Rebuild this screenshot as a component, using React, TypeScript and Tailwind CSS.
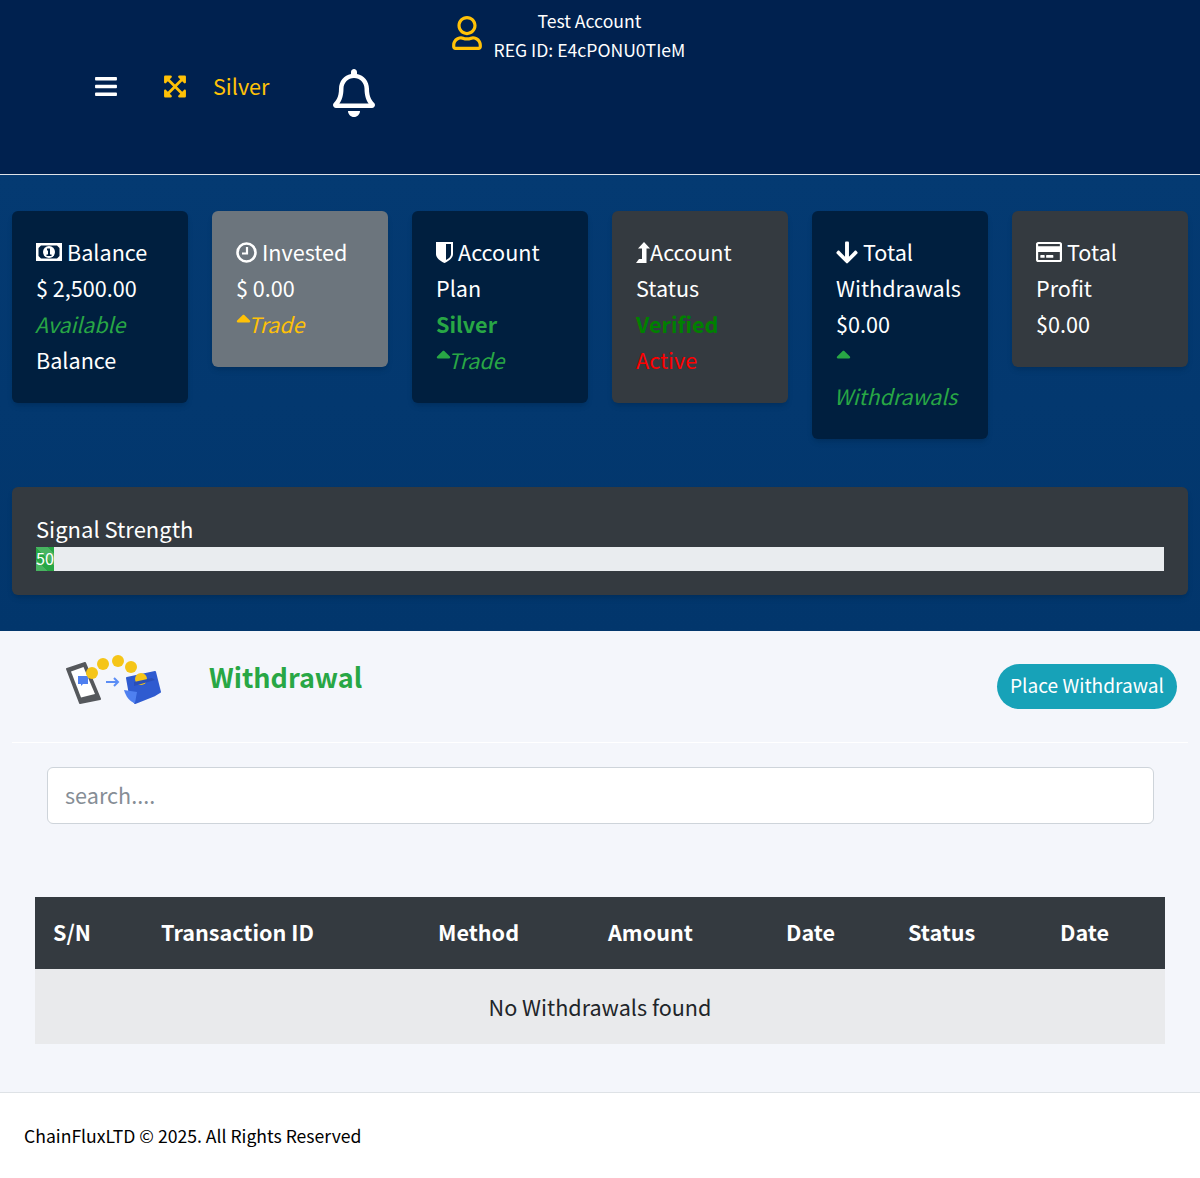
import type { ReactNode } from "react";
import { FaArrowDown, FaBars, FaExpandArrowsAlt, FaRegBell, FaRegCreditCard, FaRegUser, FaSortUp } from "react-icons/fa";

const font = { fontFamily: '"Noto Sans CJK SC", "Source Sans Pro", sans-serif' };

function Card({ tone, children }: { tone: string; children: ReactNode }) {
  return <div className={`w-[176px] rounded-md pb-[25px] pl-6 pr-6 pt-[23px] text-[21.6px]/[36px] text-white shadow-md ${tone}`}>{children}</div>;
}

function MoneyIcon() {
  return (
    <svg viewBox="0 0 26 18" className="h-[18px] w-[26px] shrink-0">
      <path fillRule="evenodd" fill="currentColor" d="M0 0h26v18H0zM5 2.500 2.500 5v8L5 15.500h16l2.500-2.500V5L21 2.500z" />
      <circle cx="13" cy="9" r="6" fill="currentColor" />
      <path d="M11 5.500h3v6h1.500v1.500h-5v-1.500H12v-4h-1z" fill="#001f3f" />
    </svg>
  );
}

function ClockIcon() {
  return (
    <svg viewBox="0 0 21 21" className="h-[21px] w-[21px] shrink-0" fill="none" stroke="currentColor">
      <circle cx="10.500" cy="10.500" r="9" strokeWidth="2.600" />
      <path d="M11 5v6.500H6" strokeWidth="2.200" />
    </svg>
  );
}

function ShieldIcon() {
  return (
    <svg viewBox="0 0 17 21" className="h-[21px] w-[17px] shrink-0">
      <path fillRule="evenodd" fill="currentColor" d="M0 0h17v12c0 4-4 7-8.500 9C4 19 0 16 0 12zM10 2v16c3-1.500 5-3.500 5-6V2z" />
    </svg>
  );
}

function LevelUpIcon() {
  return (
    <svg viewBox="0 0 14 21" className="h-[21px] w-[14px] shrink-0">
      <path fill="currentColor" d="M8 0l6 6.500h-3.500V21H0l3-4h3V6.500H2z" />
    </svg>
  );
}

function WithdrawalArt() {
  return (
    <svg width="100" height="56" viewBox="0 0 100 56" className="blur-[0.5px]">
      <path d="M5 14 23 8l15 36-20 4z" fill="#55585c" strokeLinejoin="round" stroke="#55585c" strokeWidth="2" />
      <path d="M9 16.500 21.500 12 33 39l-14 3.500z" fill="#ffffff" />
      <path d="M16 21h10v8h-5l-2 2v-2h-3z" fill="#4f80f0" />
      <circle cx="30" cy="18" r="6" fill="#f5c518" />
      <circle cx="41" cy="9" r="6" fill="#f5c518" />
      <circle cx="56" cy="6" r="6" fill="#f5c518" />
      <circle cx="69" cy="12" r="6" fill="#f5c518" />
      <path d="M44 27h12m-4-4 4 4-4 4" stroke="#5b8df5" strokeWidth="2" fill="none" />
      <path d="M65 23 93 17l5 20-5 3-20 8-5-8z" fill="#2f5bd0" stroke="#2f5bd0" strokeLinejoin="round" strokeWidth="2" />
      <circle cx="79" cy="24" r="6" fill="#f5c518" />
      <path d="M72 27 90 23l3 2-21 6z" fill="#2a4fb8" />
      <path d="M62 35l13 2-2 11c-5-1-9-6-11-13z" fill="#4f80f0" />
    </svg>
  );
}

export default function App() {
  return (
    <div className="bg-[#f4f6fb] text-[#212529]" style={font}>
      <header className="flex h-[175px] items-start border-b border-[#dfe3e8] bg-[#00214f] text-white">
        <FaBars className="ml-[95px] mt-[74px] h-[25px] w-[22px]" />
        <FaExpandArrowsAlt className="ml-[47px] mt-[74px] h-[25px] w-[22px] text-[#ffc107]" />
        <span className="ml-[27px] mt-[68px] text-[21.6px]/[36px] text-[#ffc107]">Silver</span>
        <FaRegBell className="ml-[64px] mt-[69px] h-[48px] w-[42px]" />
        <FaRegUser className="ml-[77px] mt-[16px] h-[34px] w-[30px] text-[#ffc107]" />
        <div className="ml-[11px] mt-[6px] text-center text-[17.600px]/[29px]">
          <div>Test Account</div>
          <div>REG ID: E4cPONU0TIeM</div>
        </div>
      </header>

      <section className="bg-gradient-to-b from-[#043a72] to-[#02366c] px-3 py-9">
        <div className="flex items-start gap-6">
          <Card tone="bg-[#001f3f]">
            <div className="flex items-center gap-[5px]"><MoneyIcon />Balance</div>
            <div>$ 2,500.00</div>
            <div className="-ml-px text-[21.300px] italic text-[#28a745]">Available</div>
            <div>Balance</div>
          </Card>
          <Card tone="bg-[#6c757d]">
            <div className="flex items-center gap-[5px]"><ClockIcon />Invested</div>
            <div>$ 0.00</div>
            <div className="flex items-center text-[21.300px] italic text-[#ffc107]"><FaSortUp className="h-[24px] w-[15px]" /><span className="-ml-[3px]">Trade</span></div>
          </Card>
          <Card tone="bg-[#001f3f]">
            <div className="flex items-center gap-[5px]"><ShieldIcon />Account</div>
            <div>Plan</div>
            <div className="font-bold text-[#28a745]">Silver</div>
            <div className="flex items-center text-[21.300px] italic text-[#28a745]"><FaSortUp className="h-[24px] w-[15px]" /><span className="-ml-[3px]">Trade</span></div>
          </Card>
          <Card tone="bg-[#343a40]">
            <div className="flex items-center"><LevelUpIcon />Account</div>
            <div>Status</div>
            <div className="font-bold text-[#008000]">Verified</div>
            <div className="text-[#ff0000]">Active</div>
          </Card>
          <Card tone="bg-[#001f3f]">
            <div className="flex items-center gap-[5px]"><FaArrowDown className="h-[25px] w-[22px]" />Total</div>
            <div>Withdrawals</div>
            <div>$0.00</div>
            <FaSortUp className="h-[36px] w-[15px] text-[#28a745]" />
            <div className="-ml-[2px] text-[21.300px] italic text-[#28a745]">Withdrawals</div>
          </Card>
          <Card tone="bg-[#343a40]">
            <div className="flex items-center gap-[5px]"><FaRegCreditCard className="h-[24px] w-[26px]" />Total</div>
            <div>Profit</div>
            <div>$0.00</div>
          </Card>
        </div>

        <div className="mt-12 rounded-md bg-[#343a40] p-6 text-white shadow-md">
          <div className="h-[36px] text-[22px]/[34px]">Signal Strength</div>
          <div className="h-6 bg-[#e9ecef]">
            <div className="h-6 w-[18px] bg-[#28a745] bg-[linear-gradient(45deg,rgba(255,255,255,.15)_25%,transparent_25%,transparent_50%,rgba(255,255,255,.15)_50%,rgba(255,255,255,.15)_75%,transparent_75%,transparent)] bg-[length:24px_24px] text-center text-[16.200px]/[22px]">50</div>
          </div>
        </div>
      </section>

      <section className="px-3">
        <div className="flex h-[112px] items-start border-b border-white">
          <div className="ml-[50px] mt-[24px]"><WithdrawalArt /></div>
          <h2 className="ml-[47px] mt-[23px] text-[27px]/[45px] font-bold text-[#28a745]">Withdrawal</h2>
          <button className="ml-auto mr-[11px] mt-[33px] h-[45px] w-[180px] rounded-full bg-[#17a2b8] pb-[2px] text-[19.100px] text-white">Place Withdrawal</button>
        </div>
        <div className="ml-[35px] mr-[34px] mt-6">
          <input className="block h-[57px] w-full rounded-md border border-[#ced4da] bg-white pb-[2px] pl-[17px] pr-[18px] text-[21.6px] outline-none placeholder:text-[#868e96]" placeholder="search...." />
        </div>
        <div className="mx-[23px] mt-[73px]">
          <table className="w-full table-fixed text-left">
            <thead className="bg-[#343a40] text-[21.6px] font-bold text-white">
              <tr className="h-[72px]">
                <th className="w-[108px] pb-[2px] pl-[18px]">S/N</th>
                <th className="w-[277px] pb-[2px] pl-[18px]">Transaction ID</th>
                <th className="w-[170px] pb-[2px] pl-[18px]">Method</th>
                <th className="w-[178px] pb-[2px] pl-[18px]">Amount</th>
                <th className="w-[122px] pb-[2px] pl-[18px]">Date</th>
                <th className="w-[152px] pb-[2px] pl-[18px]">Status</th>
                <th className="pb-[2px] pl-[18px]">Date</th>
              </tr>
            </thead>
            <tbody>
              <tr className="h-[75px] bg-[#e9eaec]">
                <td colSpan={7} className="pt-[2px] text-center text-[21.6px]">No Withdrawals found</td>
              </tr>
            </tbody>
          </table>
        </div>
      </section>

      <footer className="mt-12 flex h-[86px] items-center border-t border-[#dee2e6] bg-white px-6 pt-[2px] text-[17.600px] text-black">
        ChainFluxLTD © 2025. All Rights Reserved
      </footer>
    </div>
  );
}
